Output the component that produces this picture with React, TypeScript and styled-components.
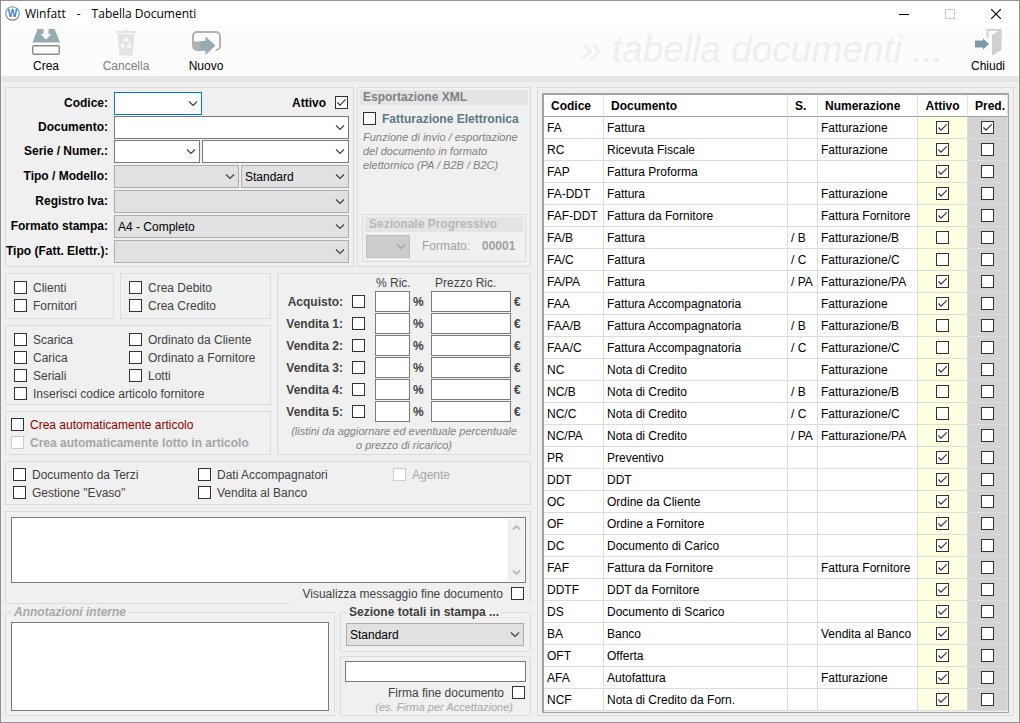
import React, { useId } from "react";
import styled, { createGlobalStyle, css } from "styled-components";

const GlobalStyle = createGlobalStyle`
  *, *::before, *::after { box-sizing: border-box; }
  body {
    margin: 0;
    font-family: "Liberation Sans", Arial, sans-serif;
    font-size: 12px;
    color: #000;
    background: #f0f0f0;
  }
  button, input, select, textarea { font: inherit; color: inherit; margin: 0; border-radius: 0; }
`;

/* ---------- Window frame ---------- */

const Window = styled.div`
  min-height: 100vh;
  display: flex;
  flex-direction: column;
  border: 1px solid #919191;
  background: #f0f0f0;
`;

const TitleBar = styled.header`
  display: flex;
  align-items: center;
  height: 25px;
  padding-left: 4px;
  background: #fff;
  font-family: "Open Sans", "Noto Sans", sans-serif;
`;

const TitleText = styled.h1`
  display: flex;
  gap: 11px;
  flex: 1;
  margin: 0 0 0 5px;
  font-size: 12px;
  font-weight: 400;
  line-height: 16px;
`;

const CaptionButton = styled.button`
  display: grid;
  place-items: center;
  width: 46px;
  height: 25px;
  padding: 0;
  border: 0;
  background: none;
  color: #000;
  &:disabled { color: #ccc; }
`;

const Toolbar = styled.div`
  display: flex;
  align-items: flex-start;
  height: 56px;
  padding: 0 7px 0 5px;
  background: #fcfcfc;
  border-bottom: 6px solid #e5e5e5;
`;

const ToolButton = styled.button<{ $width: number }>`
  display: flex;
  flex-direction: column;
  align-items: center;
  gap: 3px;
  width: ${(p) => p.$width}px;
  padding: 2px 0 0;
  border: 0;
  background: none;
  line-height: 14px;
  &:disabled { color: #808080; }
`;

const Watermark = styled.div`
  flex: 1;
  padding-right: 21px;
  text-align: right;
  font-size: 37px;
  line-height: 48px;
  font-style: italic;
  white-space: nowrap;
  color: #eeeeee;
`;

/* ---------- Page layout ---------- */

const Body = styled.main`
  flex: 1;
  display: grid;
  grid-template-columns: 526px minmax(470px, 1fr);
  align-items: start;
  gap: 6px;
  padding: 5px 5px 6px 4px;
`;

const Column = styled.div<{ $gap?: number }>`
  display: flex;
  flex-direction: column;
  gap: ${(p) => p.$gap ?? 6}px;
`;

const Columns = styled.div<{ $template: string; $gap?: number }>`
  display: grid;
  grid-template-columns: ${(p) => p.$template};
  gap: ${(p) => p.$gap ?? 6}px;
`;

const Panel = styled.section<{ $pad: string }>`
  border: 1px solid #dcdcdc;
  padding: ${(p) => p.$pad};
`;

const GroupBox = styled.fieldset<{ $pad: string }>`
  min-width: 0;
  margin: 0;
  border: 1px solid #dcdcdc;
  padding: ${(p) => p.$pad};
`;

const Legend = styled.legend<{ $muted?: boolean }>`
  margin-left: 1px;
  padding: 0 2px;
  font-weight: 700;
  line-height: 15px;
  color: #404040;
  ${(p) => p.$muted && css`color: #a8a8a8; font-style: italic;`}
`;

const Heading = styled.h2<{ $muted?: boolean }>`
  margin: 0;
  padding-left: ${(p) => (p.$muted ? 4 : 3)}px;
  font-size: 12px;
  line-height: 15px;
  background: #e4e4e4;
  color: ${(p) => (p.$muted ? "#b8b8b8" : "#808080")};
`;

const Note = styled.p<{ $align?: string; $pale?: boolean; $pad?: string }>`
  margin: 0;
  padding: ${(p) => p.$pad ?? 0};
  font-size: 11px;
  line-height: 14px;
  font-style: italic;
  text-align: ${(p) => p.$align ?? "left"};
  color: ${(p) => (p.$pale ? "#a8a8a8" : "#808080")};
`;

/* ---------- Controls ---------- */

const CheckBox = styled.span`
  display: inline-grid;
  flex: none;
  width: 13px;
  height: 13px;
  input, svg { grid-area: 1 / 1; }
  input {
    appearance: none;
    width: 13px;
    height: 13px;
    border: 1px solid #333;
    background: #fff;
  }
  input:disabled { border-color: #ccc; }
  svg { visibility: hidden; pointer-events: none; }
  input:checked + svg { visibility: visible; }
`;

const Check = (props: React.InputHTMLAttributes<HTMLInputElement>) => (
  <CheckBox>
    <input type="checkbox" {...props} />
    <svg width="13" height="13" viewBox="0 0 13 13" fill="none" stroke="#333" strokeWidth="1.2">
      <path d="M2.5 6.5 5 9.2 10.7 3.3" />
    </svg>
  </CheckBox>
);

type Tone = "normal" | "accent" | "danger" | "disabled" | "strong";
const tones: Record<Tone, string> = {
  normal: "#424242",
  accent: "#5c7986",
  danger: "#8b0000",
  disabled: "#a5a5a5",
  strong: "#000",
};

const CheckLabel = styled.label<{ $tone: Tone; $bold?: boolean; $gap?: number }>`
  display: flex;
  align-items: flex-start;
  justify-content: ${(p) => (p.$gap ? "flex-end" : "flex-start")};
  gap: ${(p) => p.$gap ?? 6}px;
  line-height: 14px;
  white-space: nowrap;
  color: ${(p) => tones[p.$tone]};
  font-weight: ${(p) => (p.$bold ? 700 : 400)};
`;

type OptionProps = { text: string; tone?: Tone; bold?: boolean; disabled?: boolean };
const Option = ({ text, tone = "normal", bold, disabled }: OptionProps) => (
  <CheckLabel $tone={disabled ? "disabled" : tone} $bold={bold}>
    <Check disabled={disabled} />
    {text}
  </CheckLabel>
);

const OptionGrid = styled.div<{ $template: string }>`
  display: grid;
  grid-template-columns: ${(p) => p.$template};
  row-gap: 4px;
`;

const WideCell = styled.div`
  grid-column: 1 / -1;
`;

type Fill = "edit" | "active" | "list" | "off";
const fills: Record<Fill, [string, string]> = {
  edit: ["#fff", "#7a7a7a"],
  active: ["#fff", "#0078d7"],
  list: ["#e1e1e1", "#adadad"],
  off: ["#cccccc", "#bfbfbf"],
};

const SelectBox = styled.span<{ $fill: Fill; $width?: number }>`
  display: grid;
  align-items: center;
  height: 23px;
  ${(p) => (p.$width ? css`width: ${p.$width}px;` : css`flex: 1;`)}
  color: #000;
  select, svg { grid-area: 1 / 1; }
  select {
    appearance: none;
    width: 100%;
    height: 23px;
    padding: 0 18px 0 3px;
    border: 1px solid ${(p) => fills[p.$fill][1]};
    background: ${(p) => fills[p.$fill][0]};
    outline: 0;
    opacity: 1;
  }
  svg {
    justify-self: end;
    margin-right: 4px;
    pointer-events: none;
    stroke: ${(p) => (p.$fill === "off" ? "#a0a0a0" : "#404040")};
  }
`;

type ComboProps = { id?: string; label?: string; value?: string; fill?: Fill; width?: number };
const Combo = ({ id, label, value = "", fill = "list", width }: ComboProps) => (
  <SelectBox $fill={fill} $width={width}>
    <select id={id} aria-label={label} defaultValue={value} disabled={fill === "off"}>
      <option>{value}</option>
    </select>
    <svg width="10" height="7" viewBox="0 0 10 7" fill="none" strokeWidth="1.2">
      <path d="M1 1.5 5 5.5 9 1.5" />
    </svg>
  </SelectBox>
);

const TextInput = styled.input`
  width: 100%;
  height: 21px;
  padding: 0 3px;
  border: 1px solid #7a7a7a;
  background: #fff;
`;

const Memo = styled.textarea<{ $height: number; $bare?: boolean }>`
  display: block;
  width: 100%;
  height: ${(p) => p.$height}px;
  padding: 2px 3px;
  border: ${(p) => (p.$bare ? "0" : "1px solid #7a7a7a")};
  background: #fff;
  outline: 0;
  resize: none;
`;

const MemoFrame = styled.div`
  display: flex;
  border: 1px solid #7a7a7a;
  background: #fff;
`;

const ScrollRail = styled.div`
  display: flex;
  flex-direction: column;
  justify-content: space-between;
  width: 16px;
  margin: 1px;
  background: #f0f0f0;
  button {
    display: grid;
    place-items: center;
    width: 16px;
    height: 17px;
    padding: 0;
    border: 0;
    background: none;
  }
`;

/* Sits on the panel's lower edge and hides that stretch of the border. */
const EdgeLabelRow = styled.div`
  display: flex;
  justify-content: flex-end;
  margin-bottom: -1px;
  label {
    padding: 4px 2px 3px 12px;
    background: #f0f0f0;
  }
`;

const Line = styled.div<{ $gap?: number; $indent?: number }>`
  display: flex;
  align-items: center;
  gap: ${(p) => p.$gap ?? 2}px;
  padding-left: ${(p) => p.$indent ?? 0}px;
`;

const Field = styled.div`
  display: grid;
  grid-template-columns: 102px 1fr;
  align-items: center;
  column-gap: 6px;
`;

const FieldLabel = styled.label`
  padding-bottom: 2px;
  text-align: right;
  font-weight: 700;
  line-height: 14px;
  white-space: nowrap;
`;

const PriceLabel = styled(FieldLabel)`
  padding-bottom: 0;
`;

const PushRight = styled.div`
  margin-left: auto;
  padding-right: 1px;
`;

const ActiveFlag = styled(PushRight)`
  padding-bottom: 1px;
`;

const SmallText = styled.span<{ $bold?: boolean }>`
  color: #a0a0a0;
  line-height: 15px;
  font-weight: ${(p) => (p.$bold ? 700 : 400)};
`;

const XmlPanel = styled(Panel)`
  display: flex;
  flex-direction: column;
`;

const XmlBody = styled.div`
  display: flex;
  flex-direction: column;
  gap: 4px;
  padding: 7px 3px;
`;

const Progressive = styled(Panel)`
  margin: auto 2px 2px;
`;

/* ---------- Price list grid ---------- */

const PriceRow = styled.div<{ $head?: boolean }>`
  display: grid;
  grid-template-columns: 65px 9px 23px 35px 21px 80px 1fr;
  align-items: center;
  height: ${(p) => (p.$head ? 17 : 21)}px;
  color: #424242;
`;

const PriceHead = styled.span<{ $start: number; $indent: number }>`
  grid-column: ${(p) => p.$start} / span 2;
  padding-left: ${(p) => p.$indent}px;
  white-space: nowrap;
`;

const Unit = styled.span`
  padding-left: 3px;
  font-weight: 700;
`;

/* ---------- Documents table ---------- */

const TableFrame = styled.div`
  border: 2px solid #a2a2a8;
  border-right-width: 1px;
  border-bottom-width: 1px;
  padding-bottom: 1px;
  background: #f0f0f0;
`;

const Table = styled.table`
  width: 100%;
  table-layout: fixed;
  border-collapse: separate;
  border-spacing: 0;
  background: #fff;
`;

const Th = styled.th<{ $center?: boolean }>`
  height: 22px;
  padding: 0 0 0 ${(p) => (p.$center ? 0 : 7)}px;
  text-align: ${(p) => (p.$center ? "center" : "left")};
  line-height: 14px;
  white-space: nowrap;
  border-right: 1px solid #e0e0e0;
  border-bottom: 1px solid #a0a0a0;
`;

const Td = styled.td<{ $fill?: string }>`
  height: 22px;
  padding: 0 0 0 ${(p) => (p.$fill ? 0 : 3)}px;
  line-height: 14px;
  white-space: nowrap;
  background: ${(p) => p.$fill ?? "#fff"};
  border-right: 1px solid #dcdcdc;
  border-bottom: 1px solid #dcdcdc;
  > span { display: grid; margin: 0 auto; }
`;

type Doc = [code: string, name: string, serie: string, numbering: string, active: boolean];
const docs: Doc[] = [
  ["FA", "Fattura", "", "Fatturazione", true],
  ["RC", "Ricevuta Fiscale", "", "Fatturazione", true],
  ["FAP", "Fattura Proforma", "", "", true],
  ["FA-DDT", "Fattura", "", "Fatturazione", true],
  ["FAF-DDT", "Fattura da Fornitore", "", "Fattura Fornitore", true],
  ["FA/B", "Fattura", "/ B", "Fatturazione/B", false],
  ["FA/C", "Fattura", "/ C", "Fatturazione/C", false],
  ["FA/PA", "Fattura", "/ PA", "Fatturazione/PA", true],
  ["FAA", "Fattura Accompagnatoria", "", "Fatturazione", true],
  ["FAA/B", "Fattura Accompagnatoria", "/ B", "Fatturazione/B", false],
  ["FAA/C", "Fattura Accompagnatoria", "/ C", "Fatturazione/C", false],
  ["NC", "Nota di Credito", "", "Fatturazione", true],
  ["NC/B", "Nota di Credito", "/ B", "Fatturazione/B", false],
  ["NC/C", "Nota di Credito", "/ C", "Fatturazione/C", false],
  ["NC/PA", "Nota di Credito", "/ PA", "Fatturazione/PA", true],
  ["PR", "Preventivo", "", "", true],
  ["DDT", "DDT", "", "", true],
  ["OC", "Ordine da Cliente", "", "", true],
  ["OF", "Ordine a Fornitore", "", "", true],
  ["DC", "Documento di Carico", "", "", true],
  ["FAF", "Fattura da Fornitore", "", "Fattura Fornitore", true],
  ["DDTF", "DDT da Fornitore", "", "", true],
  ["DS", "Documento di Scarico", "", "", true],
  ["BA", "Banco", "", "Vendita al Banco", true],
  ["OFT", "Offerta", "", "", true],
  ["AFA", "Autofattura", "", "Fatturazione", true],
  ["NCF", "Nota di Credito da Forn.", "", "", true],
];

const priceLists = ["Acquisto:", "Vendita 1:", "Vendita 2:", "Vendita 3:", "Vendita 4:", "Vendita 5:"];

/* ---------- Icons ---------- */

const Logo = () => (
  <svg width="15" height="15" viewBox="0 0 15 15">
    <path d="M1 9A6.7 6.7 0 1 1 14 9" fill="none" stroke="#4a8cc8" strokeWidth="1.1" />
    <path d="M1 9A6.7 6.7 0 0 0 14 9" fill="none" stroke="#8a8a8a" strokeWidth="1.1" />
    <text x="7.5" y="11" textAnchor="middle" fontFamily="Liberation Sans" fontSize="10" fontWeight="700" fill="#3a80c0">W</text>
  </svg>
);

const CreateIcon = () => (
  <svg width="30" height="28" viewBox="0 0 30 28">
    <path d="M6.500 1H12.500V6H9.500L15 11.500 20.500 6H17.500V1H23.500L29 14.500H1.500Z" fill="#96abb2" />
    <rect x="1.700" y="17.700" width="26.600" height="8.600" rx="1.500" fill="#fcfcfc" stroke="#8c8c8c" strokeWidth="1.400" />
  </svg>
);

const TrashIcon = () => (
  <svg width="22" height="28" viewBox="0 0 22 28" fill="none">
    <path d="M1 4H21M11 0.500V4" stroke="#e3e3e3" strokeWidth="1.800" />
    <path d="M2.500 6H19.500L17.500 27.500H4.500Z" fill="#e3e3e3" />
    <path d="M8.700 13.500 11 10.500 13.300 13.500M7.700 15 6.700 18.500H10M14.300 15 15.300 18.500H12" stroke="#fcfcfc" strokeWidth="1.800" />
  </svg>
);

const NewIcon = () => (
  <svg width="30" height="28" viewBox="0 0 30 28">
    <rect x="2" y="4" width="27" height="18" rx="4" fill="#fcfcfc" stroke="#b2b2b2" strokeWidth="2" />
    <path d="M2 13.500H14V22H6Q2 22 2 18Z" fill="#b2b2b2" />
    <path d="M20.500 20.500H25.500L23.500 25H17Z" fill="#fcfcfc" />
    <path d="M9.500 13H14.500V8.500L24.500 17.500 14.500 27V22H9.500Z" fill="#96abb2" />
  </svg>
);

const DoorIcon = () => (
  <svg width="28" height="28" viewBox="0 0 28 28">
    <path d="M13.500 10V2H26.500V10" fill="none" stroke="#d0d0d0" strokeWidth="2" />
    <path d="M18 7 27.500 1V22L18 27.500Z" fill="#d0d0d0" />
    <path d="M1 12.500H9V10.500L15 16 9 21.500V19.500H1Z" fill="#7c9aa3" />
  </svg>
);

const ScrollArrow = ({ down }: { down?: boolean }) => (
  <svg width="9" height="7" viewBox="0 0 9 7" fill="none" stroke="#bababa" strokeWidth="1.800">
    <path d={down ? "M1 1.500 4.500 5 8 1.500" : "M1 5.500 4.500 2 8 5.500"} />
  </svg>
);

/* ---------- Sections ---------- */

const DocumentForm = () => {
  const id = useId();
  return (
    <Panel $pad="4px 4px 3px 0">
      <Column $gap={2}>
        <Column $gap={1}>
          <Field>
            <FieldLabel htmlFor={`${id}code`}>Codice:</FieldLabel>
            <Line>
              <Combo id={`${id}code`} fill="active" width={88} />
              <ActiveFlag>
                <CheckLabel $tone="strong" $bold $gap={9}>
                  Attivo
                  <Check defaultChecked />
                </CheckLabel>
              </ActiveFlag>
            </Line>
          </Field>
          <Field>
            <FieldLabel htmlFor={`${id}name`}>Documento:</FieldLabel>
            <Combo id={`${id}name`} fill="edit" />
          </Field>
          <Field>
            <FieldLabel htmlFor={`${id}serie`}>Serie / Numer.:</FieldLabel>
            <Line>
              <Combo id={`${id}serie`} fill="edit" width={86} />
              <Combo label="Numerazione" fill="edit" />
            </Line>
          </Field>
        </Column>
        <Field>
          <FieldLabel htmlFor={`${id}type`}>Tipo / Modello:</FieldLabel>
          <Line>
            <Combo id={`${id}type`} width={125} />
            <Combo label="Modello" value="Standard" />
          </Line>
        </Field>
        <Field>
          <FieldLabel htmlFor={`${id}vat`}>Registro Iva:</FieldLabel>
          <Combo id={`${id}vat`} />
        </Field>
        <Field>
          <FieldLabel htmlFor={`${id}format`}>Formato stampa:</FieldLabel>
          <Combo id={`${id}format`} value="A4 - Completo" />
        </Field>
        <Field>
          <FieldLabel htmlFor={`${id}einvoice`}>Tipo (Fatt. Elettr.):</FieldLabel>
          <Combo id={`${id}einvoice`} />
        </Field>
      </Column>
    </Panel>
  );
};

const XmlExport = () => (
  <XmlPanel $pad="2px">
    <Heading>Esportazione XML</Heading>
    <XmlBody>
      <Option text="Fatturazione Elettronica" tone="accent" bold />
      <Note>
        Funzione di invio / esportazione
        <br />
        del documento in formato
        <br />
        elettornico (PA / B2B / B2C)
      </Note>
    </XmlBody>
    <Progressive $pad="2px 2px 3px">
      <Column $gap={3}>
        <Heading $muted>Sezionale Progressivo</Heading>
        <Line $gap={12} $indent={1}>
          <Combo label="Sezionale" fill="off" width={44} />
          <SmallText>Formato:</SmallText>
          <SmallText $bold>00001</SmallText>
        </Line>
      </Column>
    </Progressive>
  </XmlPanel>
);

const PriceLists = () => (
  <Panel $pad="0">
    <PriceRow $head>
      <PriceHead $start={4} $indent={1}>% Ric.</PriceHead>
      <PriceHead $start={6} $indent={4}>Prezzo Ric.</PriceHead>
    </PriceRow>
    <Column $gap={1}>
      {priceLists.map((name) => (
        <PriceRow key={name}>
          <PriceLabel htmlFor={name}>{name}</PriceLabel>
          <span />
          <Check id={name} />
          <TextInput aria-label={`${name} % Ric.`} />
          <Unit>%</Unit>
          <TextInput aria-label={`${name} Prezzo Ric.`} />
          <Unit>€</Unit>
        </PriceRow>
      ))}
      <Note $align="center" $pad="1px 0 0">
        (listini da aggiornare ed eventuale percentuale
        <br />o prezzo di ricarico)
      </Note>
    </Column>
  </Panel>
);

const DocumentsTable = () => (
  <Panel $pad="5px 4px 2px">
    <TableFrame>
      <Table>
        <colgroup>
          <col width="60" />
          <col />
          <col width="30" />
          <col width="100" />
          <col width="50" />
          <col width="40" />
        </colgroup>
        <thead>
          <tr>
            <Th>Codice</Th>
            <Th>Documento</Th>
            <Th>S.</Th>
            <Th>Numerazione</Th>
            <Th $center>Attivo</Th>
            <Th>Pred.</Th>
          </tr>
        </thead>
        <tbody>
          {docs.map(([code, name, serie, numbering, active], i) => (
            <tr key={code}>
              <Td>{code}</Td>
              <Td>{name}</Td>
              <Td>{serie}</Td>
              <Td>{numbering}</Td>
              <Td $fill="#ffffe1">
                <Check defaultChecked={active} aria-label={`${code} Attivo`} />
              </Td>
              <Td $fill="#d3d3d3">
                <Check defaultChecked={i === 0} aria-label={`${code} Pred.`} />
              </Td>
            </tr>
          ))}
        </tbody>
      </Table>
    </TableFrame>
  </Panel>
);

export default function App() {
  return (
    <Window>
      <GlobalStyle />
      <TitleBar>
        <Logo />
        <TitleText>
          <span>Winfatt</span>
          <span>-</span>
          <span>Tabella Documenti</span>
        </TitleText>
        <CaptionButton aria-label="Riduci">
          <svg width="10" height="10"><path d="M0 5.500H10" stroke="currentColor" /></svg>
        </CaptionButton>
        <CaptionButton aria-label="Ingrandisci" disabled>
          <svg width="10" height="10"><rect x="0.500" y="0.500" width="9" height="9" fill="none" stroke="currentColor" /></svg>
        </CaptionButton>
        <CaptionButton aria-label="Chiudi finestra">
          <svg width="10" height="10"><path d="M0 0 10 10M10 0 0 10" stroke="currentColor" strokeWidth="1.200" /></svg>
        </CaptionButton>
      </TitleBar>

      <Toolbar>
        <ToolButton $width={80}><CreateIcon />Crea</ToolButton>
        <ToolButton $width={80} disabled><TrashIcon />Cancella</ToolButton>
        <ToolButton $width={80}><NewIcon />Nuovo</ToolButton>
        <Watermark>» tabella documenti ...</Watermark>
        <ToolButton $width={48}><DoorIcon />Chiudi</ToolButton>
      </Toolbar>

      <Body>
        <Column>
          <Columns $template="349px 1fr" $gap={3}>
            <DocumentForm />
            <XmlExport />
          </Columns>

          <Columns $template="266px 1fr">
            <Column>
              <Columns $template="109px 1fr">
                <Panel $pad="7px 8px 5px">
                  <OptionGrid $template="1fr">
                    <Option text="Clienti" />
                    <Option text="Fornitori" />
                  </OptionGrid>
                </Panel>
                <Panel $pad="7px 8px 5px">
                  <OptionGrid $template="1fr">
                    <Option text="Crea Debito" />
                    <Option text="Crea Credito" />
                  </OptionGrid>
                </Panel>
              </Columns>
              <Panel $pad="7px 8px 3px">
                <OptionGrid $template="115px 1fr">
                  <Option text="Scarica" />
                  <Option text="Ordinato da Cliente" />
                  <Option text="Carica" />
                  <Option text="Ordinato a Fornitore" />
                  <Option text="Seriali" />
                  <Option text="Lotti" />
                  <WideCell>
                    <Option text="Inserisci codice articolo fornitore" />
                  </WideCell>
                </OptionGrid>
              </Panel>
              <Panel $pad="6px 5px 4px">
                <OptionGrid $template="1fr">
                  <Option text="Crea automaticamente articolo" tone="danger" />
                  <Option text="Crea automaticamente lotto in articolo" bold disabled />
                </OptionGrid>
              </Panel>
            </Column>
            <PriceLists />
          </Columns>

          <Panel $pad="6px 7px 4px">
            <OptionGrid $template="185px 195px 1fr">
              <Option text="Documento da Terzi" />
              <Option text="Dati Accompagnatori" />
              <Option text="Agente" disabled />
              <Option text={'Gestione "Evaso"'} />
              <Option text="Vendita al Banco" />
            </OptionGrid>
          </Panel>

          <Column $gap={1}>
            <Panel $pad="5px 4px 0 5px">
              <MemoFrame>
                <Memo $height={64} $bare aria-label="Messaggio fine documento" />
                <ScrollRail>
                  <button aria-label="Su"><ScrollArrow /></button>
                  <button aria-label="Giù"><ScrollArrow down /></button>
                </ScrollRail>
              </MemoFrame>
              <EdgeLabelRow>
                <CheckLabel $tone="normal" $gap={8}>
                  Visualizza messaggio fine documento
                  <Check />
                </CheckLabel>
              </EdgeLabelRow>
            </Panel>

            <Columns $template="330px 1fr" $gap={5}>
              <GroupBox $pad="2px 5px 4px">
                <Legend $muted>Annotazioni interne</Legend>
                <Memo $height={89} aria-label="Annotazioni interne" />
              </GroupBox>
              <Column $gap={4}>
                <GroupBox $pad="3px 6px 5px 5px">
                  <Legend>Sezione totali in stampa ...</Legend>
                  <Combo label="Sezione totali in stampa" value="Standard" />
                </GroupBox>
                <Panel $pad="4px 4px 1px">
                  <Column $gap={4}>
                    <TextInput aria-label="Firma" />
                    <PushRight>
                      <CheckLabel $tone="normal" $gap={8}>
                        Firma fine documento
                        <Check />
                      </CheckLabel>
                      <Note $pale $align="right" $pad="0 12px 0 0">
                        (es. Firma per Accettazione)
                      </Note>
                    </PushRight>
                  </Column>
                </Panel>
              </Column>
            </Columns>
          </Column>
        </Column>

        <DocumentsTable />
      </Body>
    </Window>
  );
}
